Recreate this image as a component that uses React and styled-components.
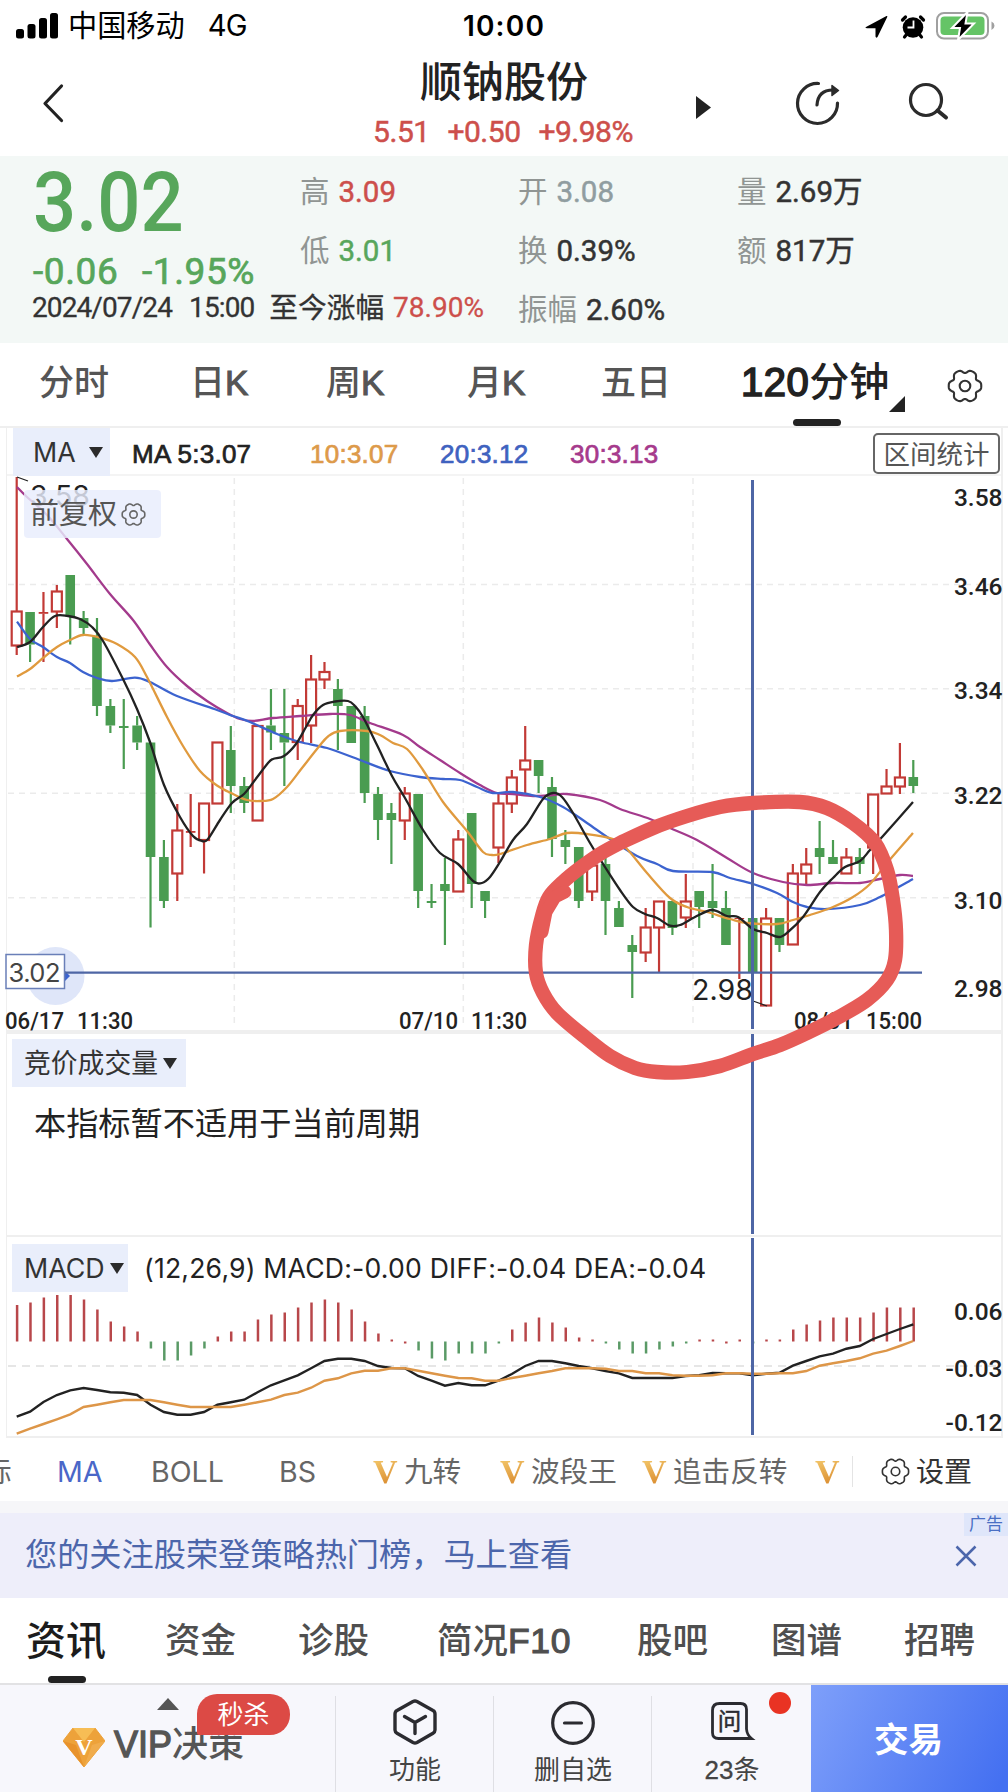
import styled, { createGlobalStyle, css } from "styled-components";

const GlobalStyle = createGlobalStyle`
  * {
    box-sizing: border-box;
  }

  body {
    margin: 0;
    background: #fff;
    font-family: Inter, "Noto Sans CJK SC", sans-serif;
    color: #222;
  }
`;

const digits = css`
  font-family: Roboto, "Noto Sans CJK SC", sans-serif;
  font-weight: 500;
`;

const Page = styled.main`
  position: relative;
  width: 1008px;
  height: 1792px;
  overflow: hidden;
  background: #fff;
  white-space: pre;
`;

// Latin part of a mixed label, thickened to sit beside the medium CJK glyphs
const Latin = styled.span`
  font-family: "Liberation Sans", sans-serif;
  letter-spacing: ${(p) => p.$track ?? 0}px;
  -webkit-text-stroke: ${(p) => p.$weight ?? 1.1}px currentColor;
`;

/* ---------- status bar ---------- */

const StatusBar = styled.div`
  height: 50px;
  padding: 2px 10px 0 16px;
  display: grid;
  grid-template-columns: 1fr auto 1fr;
  align-items: center;
  color: #000;
  font-size: 29.2px;
  line-height: 48px;
`;

const StatusLeft = styled.div`
  display: flex;
  align-items: center;
  gap: 10px;
`;

const Network = styled.span`
  margin-left: 13px;
  letter-spacing: -0.8px;
`;

const Clock = styled.div`
  margin-right: 6px;
  font-weight: 600;
  font-size: 28px;
  letter-spacing: 1.2px;
`;

const StatusRight = styled.div`
  display: flex;
  align-items: center;
  justify-content: flex-end;
`;

/* ---------- header ---------- */

const Header = styled.header`
  height: 106px;
  display: grid;
  grid-template-columns: 352px 304px 40px 92px 1fr;
`;

const TitleBlock = styled.div`
  text-align: center;
`;

const Title = styled.h1`
  margin: 5px 0 0;
  font-size: 42px;
  line-height: 54px;
  font-weight: 500;
`;

const SubQuote = styled.div`
  ${digits}
  margin: 4px 2px 0 0;
  font-size: 30px;
  line-height: 38px;
  font-weight: 400;
  letter-spacing: -0.5px;
  word-spacing: 2px;
  color: #cd4f4b;
  -webkit-text-stroke: 0.5px #cd4f4b;
`;

/* ---------- quote ---------- */

const Quote = styled.section`
  height: 187px;
  background: #f3f8f6;
  display: grid;
  grid-template-columns: 300px 218px 219px 1fr;
  grid-template-rows: 66px 52px 69px;
`;

const PriceBlock = styled.div`
  grid-row: 1 / 3;
  padding-left: 33px;
  color: #57a65b;
`;

const Price = styled.div`
  ${digits}
  margin-top: 3px;
  font-size: 84px;
  line-height: 88px;
  transform: scaleX(0.905);
  transform-origin: left;
`;

const Change = styled.div`
  ${digits}
  margin-top: 1px;
  font-size: 37px;
  line-height: 48px;
  font-weight: 400;
  letter-spacing: 0.6px;
  word-spacing: 2px;
  -webkit-text-stroke: 0.7px #57a65b;
`;

const Stat = styled.div`
  ${digits}
  display: flex;
  align-items: center;
  padding-top: ${(p) => p.$top ?? 6}px;
  font-size: 29.5px;
  line-height: 40px;
  font-weight: 400;
  color: ${(p) => p.$color ?? "#333"};
  -webkit-text-stroke: 0.5px currentColor;
`;

const StatLabel = styled.span`
  margin-right: 9px;
  color: #909593;
  -webkit-text-stroke: 0;
`;

const QuoteFoot = styled.div`
  ${digits}
  grid-column: 1 / 3;
  display: flex;
  align-items: center;
  padding: 0 0 1px 32px;
  font-size: 28px;
  font-weight: 400;
  line-height: 40px;
  letter-spacing: -0.9px;
  word-spacing: 2.5px;
  color: #333;
  -webkit-text-stroke: 0.3px currentColor;
`;

const Since = styled.span`
  margin: 0 9px 0 15px;
  font-size: 28.7px;
  letter-spacing: 0;
`;

const Red = styled.span`
  color: #cd4f4b;
  letter-spacing: 0;
`;

/* ---------- period tabs ---------- */

const PeriodTabs = styled.nav`
  height: 85px;
  padding-left: 39px;
  border-bottom: 2px solid #efefef;
  display: grid;
  grid-template-columns: 151px 136px 141px 134px 140px 206px 1fr;
`;

const Period = styled.div`
  position: relative;
  padding-top: 14px;
  font-family: "Liberation Sans", "Noto Sans CJK SC", sans-serif;
  font-size: 35px;
  line-height: 52px;
  font-weight: 500;
  color: #555;

  svg {
    display: block;
    margin-top: 11px;
  }
`;

const ActivePeriod = styled(Period)`
  padding-top: 13px;
  font-size: 40px;
  color: #222;

  &::before {
    content: "";
    position: absolute;
    left: 52px;
    bottom: 0;
    width: 48px;
    height: 7px;
    border-radius: 4px;
    background: #222;
  }

  &::after {
    content: "";
    position: absolute;
    left: 148px;
    bottom: 14px;
    border-left: 16px solid transparent;
    border-bottom: 16px solid #222;
  }
`;

/* ---------- chart panels ---------- */

const Panel = styled.section`
  position: relative;
  height: ${(p) => p.$height}px;
  margin: 0 5px 0 6px;
  border: 1px solid #efefef;
  border-width: 0 2px ${(p) => p.$line ?? 2}px 1px;
`;

const Legend = styled.div`
  height: 48px;
  display: grid;
  grid-template-columns: 103px 16px 178px 130px 130px 1fr 128px;
  align-items: center;
  padding-left: 6px;
  border-bottom: 2px solid #f4f4f4;
  font-family: "Liberation Sans", sans-serif;
  font-size: 26px;
  letter-spacing: 0.25px;
  -webkit-text-stroke: 0.7px currentColor;
`;

const LegendItem = styled.span`
  color: ${(p) => p.$color};
  padding-top: 4px;
`;

const Picker = styled.div`
  display: flex;
  align-items: center;
  gap: ${(p) => p.$gap ?? 5}px;
  width: ${(p) => p.$width}px;
  height: 48px;
  padding-left: ${(p) => p.$left ?? 12}px;
  background: #e9eefb;
  color: #333;
  font-family: Inter, "Noto Sans CJK SC", sans-serif;
  font-size: 26.8px;
  line-height: 40px;
  letter-spacing: 0;
  -webkit-text-stroke: 0;

  &::after {
    content: "";
    border: 7px solid transparent;
    border-top: 11px solid #2b2b2b;
    border-bottom: 0;
  }
`;

const RangeButton = styled.div`
  width: 127px;
  height: 41px;
  margin-top: 2px;
  border: 2px solid #666;
  border-radius: 5px;
  text-align: center;
  color: #555;
  font: 26.5px/36px "Noto Sans CJK SC", sans-serif;
  letter-spacing: 0;
  -webkit-text-stroke: 0;
`;

const Plot = styled.svg`
  display: block;
  width: 1008px;
  margin-left: -7px;
  overflow: visible;
`;

const Adjust = styled.div`
  position: absolute;
  left: 17px;
  top: 62px;
  width: 137px;
  height: 48px;
  padding-left: 6px;
  display: flex;
  align-items: center;
  gap: 4px;
  border-radius: 4px;
  background: rgba(232, 237, 252, 0.82);
  color: #555;
  font-size: 29px;
  line-height: 50px;
`;

const PanelHead = styled.div`
  display: flex;
  align-items: center;
  gap: 16px;
  padding: 5px 0 0 5px;
  font-size: 26.6px;
  line-height: 52px;
  letter-spacing: 0.2px;
`;

const Notice = styled.p`
  margin: 13px 0 0 27px;
  font-size: 32.2px;
  line-height: 48px;
  color: #222;
`;

const Crosshair = styled.div`
  position: absolute;
  left: 744px;
  top: ${(p) => p.$top}px;
  bottom: 1px;
  width: 3px;
  background: #4e66a5;
`;

const Scribble = styled.svg`
  position: absolute;
  left: 520px;
  top: 780px;
  pointer-events: none;
`;

/* ---------- indicator strip ---------- */

const Indicators = styled.div`
  height: 63px;
  padding-top: 4px;
  display: flex;
  align-items: center;
  overflow: hidden;
  font-size: 28.6px;
  line-height: 44px;
  color: #666;
`;

const Indicator = styled.div`
  flex: none;
  display: flex;
  align-items: center;
  gap: 6px;
  width: ${(p) => p.$width}px;
  margin-left: ${(p) => p.$shift ?? 0}px;
  color: ${(p) => p.$color ?? "#666"};
`;

const Gold = styled.span`
  width: 25px;
  font: bold 34px/34px "Liberation Serif", serif;
  background: linear-gradient(160deg, #f0c063 20%, #d98a2e 85%);
  background-clip: text;
  color: transparent;
`;

const Settings = styled.div`
  display: flex;
  align-items: center;
  gap: 6px;
  height: 31px;
  padding-left: 28px;
  border-left: 1px solid #e4e4e4;
  font-size: 28px;
  color: #333;
`;

/* ---------- ad ---------- */

const Ad = styled.section`
  height: 97px;
  padding-left: 25px;
  border-top: 12px solid #f6f6f9;
  background: #eeeefa;
  display: flex;
  justify-content: space-between;
  color: #4c66ab;
`;

const AdText = styled.span`
  font-size: 32.2px;
  line-height: 84px;
`;

const AdSide = styled.div`
  width: 44px;
  display: flex;
  flex-direction: column;
  font-size: 17px;
  line-height: 23px;

  svg {
    margin: 9px 0 0 -9px;
  }
`;

const AdTag = styled.span`
  background: #dfe6fa;
  text-align: center;
  color: #4a6fc4;
`;

/* ---------- news tabs ---------- */

const NewsTabs = styled.nav`
  height: 87px;
  padding-left: 26px;
  border-bottom: 2px solid #e2e2e4;
  display: grid;
  grid-template-columns: 139px 133px 139px 200px 134px 133px 1fr;
`;

const NewsTab = styled.div`
  position: relative;
  padding-top: 14px;
  font-family: "Liberation Sans", "Noto Sans CJK SC", sans-serif;
  font-size: ${(p) => (p.$active ? 40 : 35.5)}px;
  line-height: 58px;
  font-weight: 500;
  color: ${(p) => (p.$active ? "#1c1c1c" : "#4f4f4f")};

  &::after {
    content: "";
    display: ${(p) => (p.$active ? "block" : "none")};
    position: absolute;
    left: 22px;
    bottom: 0;
    width: 38px;
    height: 7px;
    border-radius: 4px;
    background: #222;
  }
`;

/* ---------- bottom bar ---------- */

const BottomBar = styled.footer`
  height: 108px;
  display: grid;
  grid-template-columns: 335px 158px 158px 160px 1fr;
  background: #f7f7fc;
`;

const Vip = styled.div`
  position: relative;
  display: flex;
  align-items: center;
  gap: 9px;
  padding: 15px 0 0 63px;
  color: #555;

  &::before {
    content: "";
    position: absolute;
    left: 157px;
    top: 13px;
    border: 11px solid transparent;
    border-bottom: 12px solid #555;
    border-top: 0;
  }
`;

const VipText = styled.span`
  margin-top: -5px;
  font-family: "Liberation Sans", "Noto Sans CJK SC", sans-serif;
  font-size: 36px;
  line-height: 50px;
  font-weight: 500;
`;

const Sale = styled.span`
  position: absolute;
  left: 197px;
  top: 9px;
  width: 93px;
  height: 41px;
  border-radius: 20px 20px 20px 2px;
  background: #dc4a45;
  color: #fff;
  text-align: center;
  font-size: 26px;
  line-height: 41px;
`;

const Action = styled.div`
  position: relative;
  display: flex;
  flex-direction: column;
  align-items: center;
  padding: 13px 0 0 2px;
  font-size: 26px;
  line-height: 36px;
  color: #444;

  svg {
    margin-bottom: 6px;
  }

  &::before {
    content: "";
    position: absolute;
    left: 0;
    top: 11px;
    bottom: 0;
    width: 1px;
    background: #dfdfe4;
  }
`;

const Dot = styled.i`
  position: absolute;
  right: 20px;
  top: 7px;
  width: 22px;
  height: 22px;
  border-radius: 50%;
  background: #e93323;
`;

const Trade = styled.div`
  padding-right: 2px;
  background: linear-gradient(115deg, #7e9ffa, #4470f1 95%);
  color: #fff;
  text-align: center;
  font-size: 34.5px;
  font-weight: 700;
  line-height: 110px;
`;

/* ---------- data ---------- */

const X0 = 16.7;
const STEP = 13.382;
const RED = "#c23a36";
const GREEN = "#4a9c51";

// [direction, high, body top, body bottom, low] on the plot's y scale
const candles = [
  ["u", 477, 611, 646, 655], ["d", 612, 612, 644.5, 662], ["u", 592, 612, 613.8, 662],
  ["u", 585, 591, 612, 628], ["d", 575, 575, 617, 644.5], ["d", 611, 618, 628, 634],
  ["d", 618, 637, 706, 716], ["d", 699, 706, 725.5, 733], ["d", 699, 726, 728, 769],
  ["d", 716, 725.5, 742.5, 750], ["d", 742.5, 742.5, 857, 927.5], ["d", 840, 857, 901, 908],
  ["u", 804, 830, 874, 901], ["u", 794, 831, 832.8, 847], ["u", 803, 803, 840.5, 873.5],
  ["u", 742, 742, 804, 804], ["d", 726, 750, 786, 813], ["d", 777, 786, 803, 813],
  ["u", 725.5, 725.5, 821, 821], ["d", 689, 725.5, 732.5, 750], ["d", 689, 733, 742.5, 786],
  ["u", 699, 705.5, 742.5, 760], ["u", 655, 679, 726, 743], ["u", 662, 671.5, 680, 689],
  ["d", 679, 689, 706, 750], ["d", 706, 706, 743, 743], ["d", 706, 716, 793, 803],
  ["d", 787, 794, 820, 840], ["d", 803, 813, 820, 864], ["u", 787, 793, 821, 840],
  ["d", 794, 794, 891, 908], ["d", 884, 901, 903, 908], ["d", 858, 884, 891, 945],
  ["u", 830, 839, 892, 892], ["d", 813, 813, 884, 908], ["d", 891, 891, 901, 918],
  ["u", 793, 803, 848, 863], ["u", 770, 777, 804, 813], ["u", 726, 760, 770, 793],
  ["d", 760, 760, 776, 793], ["d", 777, 787, 839, 857], ["d", 830, 840, 847, 864],
  ["d", 847, 847, 901, 908], ["u", 857, 865, 892, 901], ["d", 857, 864, 901, 935],
  ["d", 901, 908, 927, 927], ["d", 935, 945, 952, 998], ["u", 908, 927, 953, 962],
  ["u", 901, 901, 928, 972], ["d", 901, 901, 928, 935], ["u", 874, 901, 918, 928],
  ["d", 891, 891, 907, 928], ["d", 864, 901, 908, 918], ["d", 891, 908, 945, 945],
  ["u", 917, 918, 919, 979], ["d", 918, 918, 972, 972], ["u", 908, 918, 1006, 1006],
  ["d", 918, 918, 945, 952], ["u", 864, 873, 945, 945], ["u", 848, 864, 874, 884],
  ["d", 821, 848, 857, 874], ["d", 840, 857, 864, 864], ["u", 848, 857, 874, 874],
  ["d", 848, 857, 864, 874], ["u", 794, 794, 848, 874], ["u", 769, 786, 794, 794],
  ["u", 743, 777, 787, 794], ["d", 760, 777, 786, 793],
];

const averages = [
  {
    color: "#a33a8c",
    points: [17,487, 27,497, 47,515, 67,539, 87,564, 110,594, 133,620, 150,644.5, 167,667, 187,686, 207,701, 227,713, 240,719, 253,721, 273,718, 300,716, 330,714, 350,715, 370,723, 403,735, 420,747, 440,760, 460,773, 480,785, 497,793, 513,794, 533,796, 553,795, 567,794, 600,800, 620,809, 650,819, 670,828, 697,840, 727,858, 753,873, 783,882, 807,885, 833,883, 860,883, 880,879, 900,875, 913,876],
  },
  {
    color: "#3c63cf",
    points: [17,621.6, 30,639, 43,647, 57,657, 70,663, 83,672, 97,678, 112,681, 135,677.6, 150,682, 177,696, 217,710, 233,716, 250,722, 277,734, 300,742, 327,748, 360,760, 390,771, 420,777, 443,779, 460,780, 477,787, 493,793, 513,792, 540,797, 563,807, 587,823, 610,839, 637,856, 657,864, 673,871, 712,872, 730,878, 753,884, 777,893, 793,902, 807,907, 827,909, 860,905, 880,897, 913,879],
  },
  {
    color: "#e09a3e",
    points: [17,676.5, 30,669, 43,658, 57,647, 70,640, 83,635, 100,637.6, 117,644, 135,657, 147,677, 167,717, 183,746, 200,771, 217,785.5, 233,794, 247,800, 260,801, 273,799, 287,787, 302,768, 317,749, 328,736.5, 340,731, 367,731, 380,735, 393,743, 407,749, 423,770, 443,802, 467,831, 483,852, 492,855, 500,854, 527,845, 550,839, 567,833, 587,834, 613,839, 627,849, 647,873, 670,898, 687,907, 707,912, 730,919, 747,923, 777,924, 793,920, 810,915, 833,907, 853,897, 870,884, 887,863, 913,833],
  },
  {
    color: "#222",
    points: [17,647, 30,642, 43,627, 55,616, 68,616, 80,619, 92,627, 103,641, 123,679, 137,709, 150,742, 164,785, 180,817, 193,836, 202,841, 208,839, 220,820, 232,803, 244,794, 255,780, 268,763, 273,759, 284,756, 296,744, 306,727, 313,715, 323,705, 335,701.5, 348,701, 355,706, 363,717, 377,745, 392,776, 405,798, 423,830, 440,853, 458,864, 473,881, 482,883, 490,877, 500,862, 513,840, 527,824, 543,799, 553,793, 562,797, 573,813, 590,843, 605,867, 620,890, 633,907, 645,914, 657,918, 670,925.7, 680,925, 695,917, 712,910, 727,916, 738,917, 753,929, 767,933, 779,937, 788,932, 803,917, 820,892, 833,878, 845,867, 860,861, 870,850, 883,836, 913,802],
  },
];

const macdBars = [
  36.5, 39, 44, 46.5, 46.5, 42, 32, 20, 15, 10, -7, -19, -19, -14, -7, 5, 10, 10, 22, 27, 29, 34, 39,
  42, 39, 32, 20, 8, 2, -2, -9, -17, -19, -12, -12, -12, -2, 12, 19, 24, 19, 14, 4, 2, -2, -8, -12,
  -12, -8, -5, -2, 2, 2, -2, 2, -2, 2, 2, 12, 17, 21, 24, 24, 24, 29, 34, 34, 34,
];
const rising = [29, 53];

const diff = [
  1416.7, 1411.7, 1402, 1395, 1390.3, 1388, 1390, 1392.3, 1392.7, 1395, 1404.7, 1412, 1414.7, 1414.7,
  1412, 1404.7, 1402.3, 1399.7, 1392.3, 1385.3, 1380.3, 1375.3, 1368.3, 1361, 1358.7, 1358.7, 1361,
  1366, 1368, 1368.3, 1376, 1380.7, 1385.7, 1383, 1385.3, 1385.3, 1380.7, 1374, 1366, 1361, 1361,
  1363.3, 1366, 1368.3, 1371, 1373.3, 1378, 1378, 1378, 1378, 1376, 1375.3, 1373, 1373.3, 1373.3,
  1375.3, 1373.7, 1372.7, 1365.7, 1361, 1356.3, 1353.7, 1348.7, 1346, 1339, 1334, 1329, 1324.3,
];

const dea = [
  1433.7, 1428.7, 1424, 1419.3, 1414.3, 1407, 1404.7, 1402.3, 1400, 1400, 1400, 1402.3, 1404.7, 1407,
  1407, 1407, 1407, 1404.7, 1402.3, 1399.7, 1395, 1392.7, 1387.7, 1380.7, 1378.3, 1373.3, 1370.7,
  1370.7, 1368.3, 1368.3, 1370.7, 1373.3, 1375.7, 1378, 1378.3, 1380.7, 1380.7, 1378, 1375.7, 1373.3,
  1371, 1368.3, 1368.3, 1368.3, 1368.7, 1371, 1371, 1373.3, 1373.3, 1375.3, 1375.7, 1375.7, 1375.3,
  1373.3, 1373.3, 1373.7, 1373.7, 1373.3, 1373.3, 1371, 1365.7, 1363.3, 1361, 1358.3, 1353.7, 1350.7,
  1346, 1341,
];

const scribble = [
  620,843, 600,854, 580,868, 563,882, 549,897, 542,916, 536,945, 536,973, 543,993, 557,1013, 585,1037,
  610,1056, 635,1068, 657,1072, 687,1072, 720,1066, 753,1054, 780,1045, 807,1033, 837,1018, 867,1000,
  887,980, 895,960, 896,930, 893,900, 887,870, 875,843, 853,823, 827,808, 800,802, 753,803, 720,807,
  687,816, 653,828, 620,843,
];

const x = (i) => X0 + STEP * i;

// Catmull-Rom through a flat [x, y, x, y, ...] list
const smooth = (flat) => {
  const p = [];
  for (let i = 0; i < flat.length; i += 2) p.push([flat[i], flat[i + 1]]);
  let d = `M${p[0]}`;
  for (let i = 0; i < p.length - 1; i++) {
    const a = p[i - 1] ?? p[i];
    const b = p[i];
    const c = p[i + 1];
    const e = p[i + 2] ?? c;
    d += `C${b[0] + (c[0] - a[0]) / 6} ${b[1] + (c[1] - a[1]) / 6} ${c[0] - (e[0] - b[0]) / 6} ${c[1] - (e[1] - b[1]) / 6} ${c[0]} ${c[1]}`;
  }
  return d;
};

const polyline = (ys) => ys.map((y, i) => `${x(i)},${y}`).join(" ");

// six soft lobes, one pointing right
const gearOutline = Array.from({ length: 90 }, (_, i) => {
  const t = (i / 90) * Math.PI * 2;
  const r = 14.2 + 1.6 * Math.cos(6 * t) - 0.45 * Math.cos(12 * t);
  return `${(17 + r * Math.cos(t)).toFixed(2)},${(17 + r * Math.sin(t)).toFixed(2)}`;
}).join(" ");

/* ---------- drawings ---------- */

function Gear({ size, color, width = 1.5 }) {
  return (
    <svg width={size} height={size} viewBox="0 0 34 34" fill="none" stroke={color} strokeWidth={width} strokeLinejoin="round">
      <polygon points={gearOutline} />
      <circle cx="17" cy="17" r="5" />
    </svg>
  );
}

function StatusIcons() {
  return (
    <svg width="136" height="32" viewBox="862 8.500 136 32">
      <path d="M866 25.500 886.500 14.500Q888 14 887 16L877.500 35.500Q876 37 875.500 35V26.700H867Q864.500 26.500 866 25.500Z" />
      <circle cx="913" cy="26" r="10.300" />
      <path d="M905.500 15.500 902.500 18.500M920.500 15.500 923.500 18.500M906.500 33 904.500 35.500M919.500 33 921.500 35.500" stroke="#000" strokeWidth="3.200" strokeLinecap="round" />
      <path d="M913.500 19V26H907.500" fill="none" stroke="#fff" strokeWidth="1.800" />
      <rect x="937" y="11.500" width="51" height="25.500" rx="7" fill="none" stroke="#a0a0a0" strokeWidth="2" />
      <rect x="940.500" y="15" width="44" height="18.500" rx="4" fill="#65c466" />
      <path d="M991.500 20Q994.500 21.500 994.500 24.200T991.500 28.500Z" fill="#a0a0a0" />
      <path d="M967.500 10.500 952 26.500H960L958 38.500 974 22H965.500Z" stroke="#fff" strokeWidth="2" />
    </svg>
  );
}

function PriceChart() {
  return (
    <Plot viewBox="0 476 1008 554" height="554">
      <g stroke="#ebebeb" strokeWidth="1.500" strokeDasharray="6 5">
        {[584.5, 688.7, 793.3, 897.7].map((y) => (
          <path key={y} d={`M8 ${y}H1000`} />
        ))}
        {[234.3, 463.3, 693].map((gx) => (
          <path key={gx} d={`M${gx} 478V1028`} />
        ))}
      </g>

      {candles.map(([dir, high, top, bottom, low], i) => {
        const color = dir === "u" ? RED : GREEN;
        const hollow = dir === "u" && bottom - top > 2;
        return (
          <g key={i} stroke={color} fill={hollow ? "none" : color}>
            <path d={`M${x(i)} ${high}V${top}M${x(i)} ${bottom}V${low}`} strokeWidth="2.200" />
            {hollow ? (
              <rect x={x(i) - 5} y={top + 0.5} width="10" height={bottom - top - 1} strokeWidth="2.200" />
            ) : (
              <rect x={x(i) - 4.8} y={top} width="9.600" height={bottom - top} stroke="none" />
            )}
          </g>
        );
      })}

      {averages.map((line) => (
        <path key={line.color} d={smooth(line.points)} fill="none" stroke={line.color} strokeWidth="2.300" />
      ))}

      <path d="M17 477 28 481M753 1001 767 1006" stroke="#222" strokeWidth="1.300" />
      <g fontFamily="Inter" fontSize="28.500" fill="#222">
        <text x="30" y="505.500" textLength="60">3.58</text>
        <text x="692" y="1000" textLength="61">2.98</text>
      </g>

      <circle cx="55.500" cy="976" r="29" fill="#dfe6f9" />
      <path d="M63 969 70 976 63 983Z" fill="#3c63cf" />
      <path d="M65 972.700H922" stroke="#4e66a5" strokeWidth="2.300" />
      <rect x="6" y="954.500" width="58.500" height="34" fill="#fff" stroke="#6a7fb8" strokeWidth="1.500" />
      <text x="8.500" y="982" fontFamily="Inter" fontSize="25.500" fill="#444" textLength="52">3.02</text>

      <g fontFamily="Roboto" fontWeight="500" fontSize="24.500" fill="#222" textAnchor="end">
        <text x="1002.500" y="506">3.58</text>
        <text x="1002.500" y="595">3.46</text>
        <text x="1002.500" y="699">3.34</text>
        <text x="1002.500" y="804">3.22</text>
        <text x="1002.500" y="908.500">3.10</text>
        <text x="1002.500" y="997">2.98</text>
      </g>
      <g fontFamily="Roboto" fontWeight="500" fontSize="23.500" fill="#222">
        {[
          [5, "06/17", "11:30"],
          [399, "07/10", "11:30"],
          [794, "08/01", "15:00"],
        ].map(([left, day, time]) => (
          <g key={left}>
            <text x={left} y="1029" textLength="59" lengthAdjust="spacingAndGlyphs">{day}</text>
            <text x={left + 72} y="1029" textLength="56" lengthAdjust="spacingAndGlyphs">{time}</text>
          </g>
        ))}
      </g>
    </Plot>
  );
}

function MacdChart() {
  return (
    <Plot viewBox="0 1294 1008 140" height="140">
      <path d="M8 1366H1000" stroke="#dedede" strokeWidth="1.300" strokeDasharray="8 6" />
      {macdBars.map((h, i) => (
        <path
          key={i}
          d={`M${x(i) + 0.4} 1341.500v${-h}`}
          stroke={h > 0 || rising.includes(i) ? "#b8474a" : "#5a9a66"}
          strokeWidth="2.500"
        />
      ))}
      <polyline points={polyline(diff)} fill="none" stroke="#222" strokeWidth="2.400" />
      <polyline points={polyline(dea)} fill="none" stroke="#dd9648" strokeWidth="2.400" />
      <g fontFamily="Roboto" fontWeight="500" fontSize="24.500" fill="#222" textAnchor="end">
        <text x="1002.500" y="1320">0.06</text>
        <text x="1002.500" y="1377">-0.03</text>
        <text x="1002.500" y="1431">-0.12</text>
      </g>
    </Plot>
  );
}

export default function App() {
  return (
    <>
      <GlobalStyle />
      <Page>
        <StatusBar>
          <StatusLeft>
            <svg width="42" height="26" viewBox="0 0 42 26">
              <rect x="0" y="16" width="8" height="9.500" rx="2.500" />
              <rect x="11.500" y="11" width="8" height="14.500" rx="2.500" />
              <rect x="23" y="5" width="8" height="20.500" rx="2.500" />
              <rect x="34" y="0" width="8" height="25.500" rx="2.500" />
            </svg>
            <span>中国移动</span>
            <Network>4G</Network>
          </StatusLeft>
          <Clock>10:00</Clock>
          <StatusRight>
            <StatusIcons />
          </StatusRight>
        </StatusBar>

        <Header>
          <svg width="352" height="106" fill="none" stroke="#222" strokeWidth="3.200" strokeLinecap="round" strokeLinejoin="round">
            <path d="M61.500 36 45 53.500 61.500 70.500" />
          </svg>
          <TitleBlock>
            <Title>顺钠股份</Title>
            <SubQuote>5.51  +0.50  +9.98%</SubQuote>
          </TitleBlock>
          <svg width="60" height="106">
            <path d="M40 46 55 57.500 40 69Z" fill="#222" />
          </svg>
          <svg width="150" height="106" viewBox="696 50 150 106" fill="none" stroke="#2b2b2b" strokeWidth="3.200" strokeLinecap="round">
            <path d="M818.500 83.500A20 20 0 1 0 837.500 103" />
            <path d="M817 105Q818 90 833 90" />
            <path d="M832 85.500 838.500 90.500 832 95.500Z" fill="#2b2b2b" strokeWidth="1.500" strokeLinejoin="round" />
          </svg>
          <svg width="220" height="106" viewBox="788 50 220 106" fill="none" stroke="#2b2b2b" strokeWidth="3.200" strokeLinecap="round">
            <circle cx="926" cy="100" r="15.500" />
            <path d="M937.500 110.500 946 117.500" strokeWidth="4" />
          </svg>
        </Header>

        <Quote>
          <PriceBlock>
            <Price>3.02</Price>
            <Change>-0.06  -1.95%</Change>
          </PriceBlock>
          <Stat $color="#cd4f4b"><StatLabel>高</StatLabel>3.09</Stat>
          <Stat $color="#909da0"><StatLabel>开</StatLabel>3.08</Stat>
          <Stat><StatLabel>量</StatLabel>2.69万</Stat>
          <Stat $color="#57a65b"><StatLabel>低</StatLabel>3.01</Stat>
          <Stat><StatLabel>换</StatLabel>0.39%</Stat>
          <Stat><StatLabel>额</StatLabel>817万</Stat>
          <QuoteFoot>
            2024/07/24  15:00
            <Since>至今涨幅</Since>
            <Red>78.90%</Red>
          </QuoteFoot>
          <Stat $top={2}><StatLabel>振幅</StatLabel>2.60%</Stat>
        </Quote>

        <PeriodTabs>
          <Period>分时</Period>
          <Period>日<Latin>K</Latin></Period>
          <Period>周<Latin>K</Latin></Period>
          <Period>月<Latin>K</Latin></Period>
          <Period>五日</Period>
          <ActivePeriod><Latin $weight={1.6} $track={0.5}>120</Latin>分钟</ActivePeriod>
          <Period>
            <Gear size={36} color="#333" width={2} />
          </Period>
        </PeriodTabs>

        <Panel $height={606} $line={4}>
          <Legend>
            <Picker $width={97} $left={20} $gap={13}>MA</Picker>
            <span />
            <LegendItem $color="#222">MA 5:3.07</LegendItem>
            <LegendItem $color="#dd9a4a">10:3.07</LegendItem>
            <LegendItem $color="#3f62bf">20:3.12</LegendItem>
            <LegendItem $color="#a63a8c">30:3.13</LegendItem>
            <RangeButton>区间统计</RangeButton>
          </Legend>
          <PriceChart />
          <Adjust>
            前复权
            <Gear size={25} color="#666" width={2.2} />
          </Adjust>
          <Crosshair $top={52} />
        </Panel>

        <Panel $height={203}>
          <PanelHead>
            <Picker $width={174}>竞价成交量</Picker>
          </PanelHead>
          <Notice>本指标暂不适用于当前周期</Notice>
          <Crosshair $top={0} />
        </Panel>

        <Panel $height={201}>
          <PanelHead>
            <Picker $width={116}>MACD</Picker>
            (12,26,9) MACD:-0.00 DIFF:-0.04 DEA:-0.04
          </PanelHead>
          <MacdChart />
          <Crosshair $top={1} />
        </Panel>

        <Indicators>
          <Indicator $width={74} $shift={-17}>标</Indicator>
          <Indicator $width={94} $color="#4a67c8">MA</Indicator>
          <Indicator $width={128}>BOLL</Indicator>
          <Indicator $width={94}>BS</Indicator>
          <Indicator $width={127}><Gold>V</Gold>九转</Indicator>
          <Indicator $width={142}><Gold>V</Gold>波段王</Indicator>
          <Indicator $width={173}><Gold>V</Gold>追击反转</Indicator>
          <Indicator $width={37}><Gold>V</Gold></Indicator>
          <Settings>
            <Gear size={29} color="#333" width={1.9} />
            设置
          </Settings>
        </Indicators>

        <Ad>
          <AdText>您的关注股荣登策略热门榜，马上查看</AdText>
          <AdSide>
            <AdTag>广告</AdTag>
            <svg width="22" height="22" viewBox="0 0 22 22" stroke="#4c66ab" strokeWidth="2.500">
              <path d="M1.500 1.500 20.500 20.500M20.500 1.500 1.500 20.500" />
            </svg>
          </AdSide>
        </Ad>

        <NewsTabs>
          <NewsTab $active>资讯</NewsTab>
          <NewsTab>资金</NewsTab>
          <NewsTab>诊股</NewsTab>
          <NewsTab>简况<Latin $track={0.6}>F10</Latin></NewsTab>
          <NewsTab>股吧</NewsTab>
          <NewsTab>图谱</NewsTab>
          <NewsTab>招聘</NewsTab>
        </NewsTabs>

        <BottomBar>
          <Vip>
            <svg width="42" height="39" viewBox="0 0 42 39">
              <path d="M10 0H32L42 13 21 39 0 13Z" fill="#eda23a" stroke="#eda23a" strokeLinejoin="round" />
              <path d="M10 0H32L21 14Z" fill="#f7bd55" />
              <path d="M0 13 13 17 21 39Z" fill="#e8922c" />
              <path d="M42 13 29 17 21 39Z" fill="#f0ac4c" />
              <text x="21" y="27" textAnchor="middle" fontFamily="Liberation Serif" fontWeight="bold" fontSize="24" fill="#fff">V</text>
            </svg>
            <VipText><Latin $weight={1.3}>VIP</Latin>决策</VipText>
            <Sale>秒杀</Sale>
          </Vip>
          <Action>
            <svg width="48" height="48" viewBox="0 0 48 48" fill="none" stroke="#2b2b30" strokeWidth="3.400" strokeLinejoin="round" strokeLinecap="round">
              <path d="M22 3.500Q24 2.500 26 3.500L42 12.500Q44 13.500 44 16V32Q44 34 42 35.200L26 44.500Q24 45.500 22 44.500L6 35.200Q4 34 4 32V16Q4 13.500 6 12.500Z" />
              <path d="M13.500 18.500 24 24.500 34.500 18.500M24 24.500V35.500" />
            </svg>
            功能
          </Action>
          <Action>
            <svg width="48" height="48" viewBox="0 0 48 48" fill="none" stroke="#2b2b30" strokeWidth="3.200" strokeLinecap="round">
              <circle cx="24" cy="25" r="20.300" />
              <path d="M15.500 25H32.500" />
            </svg>
            删自选
          </Action>
          <Action>
            <svg width="48" height="48" viewBox="-0.500 1 48 48" fill="none" stroke="#2b2b30" strokeWidth="2.800">
              <path d="M11 6.500H32Q38 6.500 38 12.500V32Q38.500 38 43 41.500H10Q4 41.500 4 35.500V13.500Q4 6.500 11 6.500Z" />
              <text x="21" y="32.500" textAnchor="middle" fontSize="23.500" fill="#2b2b30" strokeWidth="0.500" fontFamily="Noto Sans CJK SC">问</text>
            </svg>
            <span><Latin $weight={0.3}>23</Latin>条</span>
            <Dot />
          </Action>
          <Trade>交易</Trade>
        </BottomBar>

        <Scribble width="400" height="310" viewBox="520 780 400 310" fill="none" stroke="#e65b57" strokeWidth="14.300" strokeLinecap="round" strokeLinejoin="round">
          <path d={smooth(scribble)} />
          <path d="M565 892 555 897 546 912 542 932" strokeWidth="13" />
        </Scribble>
      </Page>
    </>
  );
}
